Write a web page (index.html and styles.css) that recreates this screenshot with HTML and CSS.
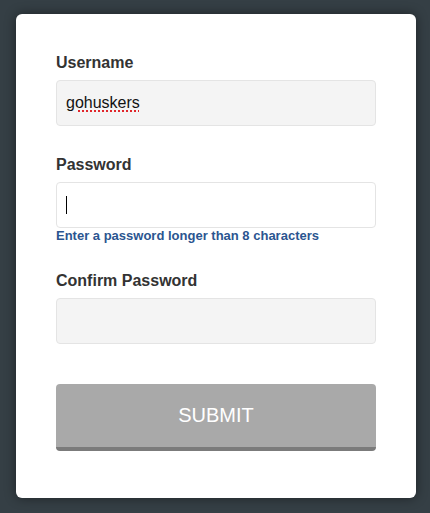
FILE: index.html
```html
<!DOCTYPE html>
<html>
<head>
<meta charset="utf-8">
<link rel="stylesheet" href="styles.css">
</head>
<body>
<form class="card">
  <div class="group group-first">
    <label class="label">Username</label>
    <div class="input filled"><span class="typed">gohuskers</span></div>
  </div>
  <div class="group group-hint">
    <label class="label">Password</label>
    <div class="input focused"><span class="caret"></span></div>
    <div class="hint">Enter a password longer than 8 characters</div>
  </div>
  <div class="group">
    <label class="label">Confirm Password</label>
    <div class="input filled"></div>
  </div>
  <button type="button" class="submit">SUBMIT</button>
</form>
</body>
</html>
```
FILE: styles.css
```css
html, body {
  margin: 0;
  padding: 0;
}
body {
  background: #353f45;
  font-family: "Liberation Sans", Arial, sans-serif;
  width: 430px;
  height: 513px;
  padding: 14px 14px 0 16px;
  box-sizing: border-box;
}
.card {
  background: #ffffff;
  border-radius: 6px;
  box-shadow: 0 0 12px rgba(0, 0, 0, 0.45);
  padding: 39px 40px 47px 40px;
  display: flex;
  flex-direction: column;
}
.group {
  display: flex;
  flex-direction: column;
  margin-bottom: 28px;
}
.group-first {
  margin-bottom: 29px;
}
.group-hint {
  margin-bottom: 28px;
}
.label {
  font-size: 16px;
  line-height: 20px;
  font-weight: bold;
  color: #333333;
  margin-bottom: 7px;
}
.input {
  height: 46px;
  box-sizing: border-box;
  border: 1px solid #e4e4e4;
  border-radius: 4px;
  display: flex;
  align-items: center;
  padding-left: 9px;
  font-size: 16px;
  color: #111111;
}
.filled {
  background: #f4f4f4;
}
.focused {
  background: #ffffff;
}
.typed {
  text-decoration: underline dotted #e0262b;
  text-decoration-thickness: 2px;
  text-underline-offset: 2px;
}
.caret {
  display: block;
  width: 1px;
  height: 18px;
  background: #000000;
}
.hint {
  margin-top: 1px;
  font-size: 13px;
  line-height: 14px;
  font-weight: bold;
  color: #2b5590;
}
.submit {
  margin-top: 12px;
  height: 67px;
  border: none;
  border-bottom: 4px solid #7b7b7b;
  border-radius: 4px;
  background: #a9a9a9;
  color: #ffffff;
  font-family: "Liberation Sans", Arial, sans-serif;
  font-size: 20px;
  padding: 0;
}
```
